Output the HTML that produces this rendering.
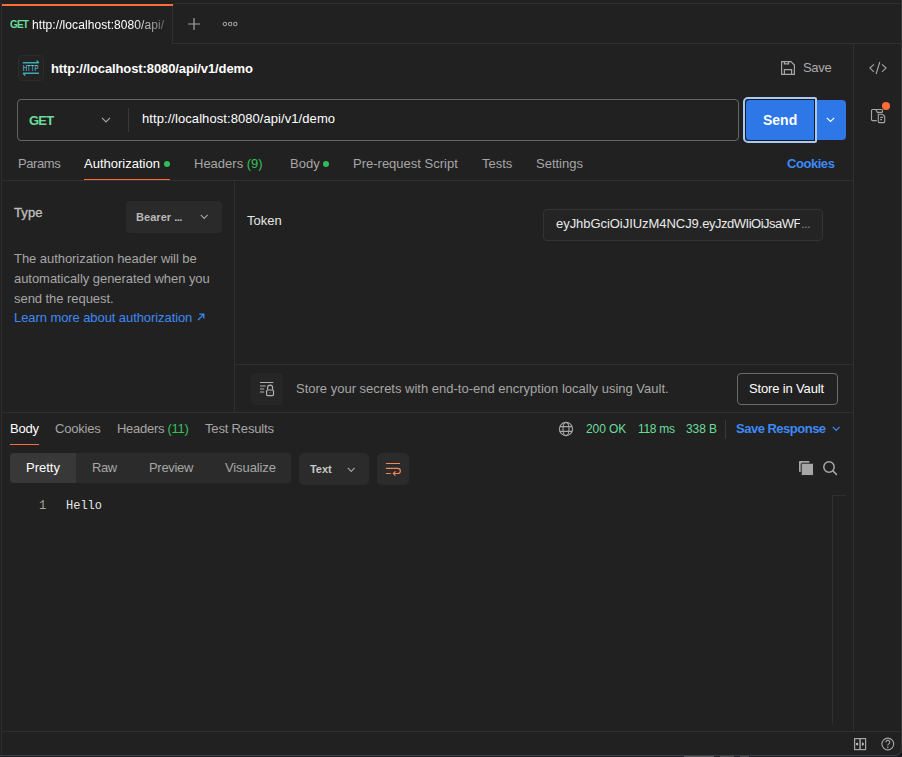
<!DOCTYPE html>
<html><head><meta charset="utf-8">
<style>
*{box-sizing:border-box;margin:0;padding:0}
html,body{width:902px;height:757px;overflow:hidden;background:#141418;font-family:"Liberation Sans",sans-serif;color:#fff}
.a{position:absolute;white-space:nowrap}
svg{display:block}
.hl{position:absolute;height:1px;background:#303030}
.vl{position:absolute;width:1px;background:#303030}
.sec{color:#a6a6a6}
.green{color:#6bdd9a}
.blue{color:#3d8af7}
</style></head><body>
<!-- window frame -->
<div class="a" style="left:0;top:756px;width:902px;height:1px;background:#1b1c2a"></div>
<div class="a" style="left:684px;top:756px;width:30px;height:1px;background:#55555e"></div>
<div class="a" style="left:720px;top:756px;width:14px;height:1px;background:#4a4a52"></div>
<div class="a" style="left:740px;top:756px;width:9px;height:1px;background:#4a4a52"></div>
<div class="a" style="left:0;top:0;width:902px;height:756px;background:#212121;border-right:1px solid #373737;border-bottom:1px solid #3e4046;border-bottom-right-radius:7px"></div>
<div class="hl" style="left:173px;top:3px;width:728px"></div>
<div class="hl" style="left:0;top:3px;width:2px"></div>
<div class="vl" style="left:1px;top:4px;height:751px;background:#2e2e2e"></div>
<!-- tab -->
<div class="a" style="left:2px;top:4px;width:171px;height:2px;background:#ff6c37"></div>
<div class="vl" style="left:172px;top:6px;height:37px"></div>
<div class="a" style="left:10px;top:19px;font-size:10px;letter-spacing:-0.9px;font-weight:bold;color:#6bdd9a">GET</div>
<div class="a" style="left:32px;top:18px;font-size:12px;color:#fff;letter-spacing:0.08px;-webkit-mask-image:linear-gradient(90deg,#000 100px,rgba(0,0,0,.3) 132px)">http://localhost:8080/api/</div>
<div class="hl" style="left:172px;top:43px;width:730px"></div>
<div class="a" style="left:188px;top:18px;width:12px;height:12px">
 <svg width="12" height="12"><path d="M6 0V12M0 6H12" stroke="#a6a6a6" stroke-width="1.2"/></svg></div>
<div class="a" style="left:222px;top:20px;width:16px;height:8px">
 <svg width="16" height="8"><circle cx="2.9" cy="4" r="1.7" fill="none" stroke="#a6a6a6" stroke-width="1.05"/><circle cx="8.1" cy="4" r="1.7" fill="none" stroke="#a6a6a6" stroke-width="1.05"/><circle cx="13.3" cy="4" r="1.7" fill="none" stroke="#a6a6a6" stroke-width="1.05"/></svg></div>

<!-- right sidebar icons -->
<div class="a" style="left:869px;top:61px"><svg width="18" height="14"><path d="M4.9 3.4L0.9 7.1L4.9 10.8M13 3.4L17 7.1L13 10.8M10.8 0.9L7.1 13" stroke="#a6a6a6" stroke-width="1.15" fill="none"/></svg></div>
<div class="a" style="left:870px;top:105px"><svg width="20" height="20"><path d="M6.7 15.6H2.5Q1.5 15.6 1.5 14.6V5.5Q1.5 4.5 2.5 4.5H11.5Q12.5 4.5 12.5 5.5V6.4Q12.5 7.4 11.5 7.4H7.3L5.8 4.6" stroke="#a6a6a6" stroke-width="1.1" fill="none"/><path d="M8.3 9.3H12.5L14.7 11.3V16.6Q14.7 17.6 13.7 17.6H9.3Q8.3 17.6 8.3 16.6Z" stroke="#a6a6a6" stroke-width="1.1" fill="none"/><path d="M10.2 12.4H13M10.2 14.6H12" stroke="#a6a6a6" stroke-width="1.1" fill="none"/></svg></div>
<div class="a" style="left:882px;top:102px;width:8px;height:8px;border-radius:4px;background:#ff6c37"></div>
<!-- right sidebar divider -->
<div class="vl" style="left:853px;top:43px;height:688px"></div>

<!-- title row -->
<div class="a" style="left:18px;top:55px;width:26px;height:26px;border:1px solid #2c2c2c;border-radius:4px;background:#232323">
 <svg width="26" height="26" style="position:absolute;left:-1px;top:-1px" viewBox="0 0 26 26"><path d="M4.8 7.8H20.6M18.6 5.6L21 7.9M5 18.2H21M5 18.2L7.3 20.6" stroke="#3fa9b2" stroke-width="1.4" fill="none"/><text x="4.8" y="15.9" font-size="8.2" font-family="Liberation Sans" textLength="15.6" lengthAdjust="spacingAndGlyphs" fill="#6fd3f0">HTTP</text></svg></div>
<div class="a" style="left:51px;top:61px;font-size:13px;font-weight:bold;letter-spacing:-0.1px">http://localhost:8080/api/v1/demo</div>
<div class="a" style="left:781px;top:61px"><svg width="14" height="14"><path d="M0.6 0.6H10L13.4 4V13.4H0.6Z M3.4 0.6V2.9H7.6V0.6 M3.4 13.4V8.6H10.6V13.4" stroke="#a6a6a6" stroke-width="1.2" fill="none"/></svg></div>
<div class="a" style="left:803px;top:60px;font-size:13px;color:#ababab;letter-spacing:-0.3px">Save</div>

<!-- request bar -->
<div class="a" style="left:17px;top:99px;width:722px;height:42px;border:1px solid #666;border-radius:4px"></div>
<div class="a green" style="left:29px;top:113px;font-size:13px;font-weight:bold;letter-spacing:-0.8px">GET</div>
<div class="a" style="left:101px;top:117px"><svg width="10" height="6"><path d="M1 0.8L5 4.8L9 0.8" stroke="#a6a6a6" stroke-width="1.2" fill="none"/></svg></div>
<div class="vl" style="left:128px;top:108px;height:24px;background:#3a3a3a"></div>
<div class="a" style="left:142px;top:111px;font-size:13px;letter-spacing:0.07px">http://localhost:8080/api/v1/demo</div>
<div class="a" style="left:815px;top:100px;width:31px;height:40px;background:#2d78e6;border-radius:0 4px 4px 0"></div>
<div class="a" style="left:826px;top:117px"><svg width="10" height="6"><path d="M0.8 0.8L4.5 4.5L8.2 0.8" stroke="#fff" stroke-width="1.2" fill="none"/></svg></div>
<div class="a" style="left:743px;top:97px;width:74px;height:46px;border:2px solid #a9c9f5;border-radius:5px 2px 2px 5px"></div>
<div class="a" style="left:745px;top:99px;width:70px;height:42px;border:1px solid #1a1a1a;background:#2d78e6;border-radius:4px 0 0 4px"></div>
<div class="a" style="left:763px;top:112px;font-size:14px;font-weight:bold">Send</div>

<!-- request tabs -->
<div class="a sec" style="left:18px;top:156px;font-size:13px;letter-spacing:-0.4px">Params</div>
<div class="a" style="left:84px;top:156px;font-size:13px">Authorization</div>
<div class="a" style="left:84px;top:179px;width:86px;height:1px;background:#ff6c37"></div>
<div class="a" style="left:164px;top:161px;width:6px;height:6px;border-radius:3px;background:#30bd58"></div>
<div class="a" style="left:323px;top:161px;width:6px;height:6px;border-radius:3px;background:#30bd58"></div>
<div class="a sec" style="left:194px;top:156px;font-size:13px">Headers <span style="color:#34c25a">(9)</span></div>
<div class="a sec" style="left:290px;top:156px;font-size:13px">Body</div>
<div class="a sec" style="left:353px;top:156px;font-size:13px">Pre-request Script</div>
<div class="a sec" style="left:482px;top:156px;font-size:13px">Tests</div>
<div class="a sec" style="left:536px;top:156px;font-size:13px">Settings</div>
<div class="a blue" style="left:787px;top:156px;font-size:13px;font-weight:bold;letter-spacing:-0.45px">Cookies</div>
<div class="hl" style="left:2px;top:180px;width:851px"></div>

<!-- auth left -->
<div class="vl" style="left:234px;top:181px;height:231px"></div>
<div class="a" style="left:14px;top:205px;font-size:13px;color:#bdbdbd;-webkit-text-stroke:0.35px #bdbdbd;letter-spacing:0.1px">Type</div>
<div class="a" style="left:126px;top:201px;width:96px;height:32px;background:#2a2a2a;border-radius:4px"></div>
<div class="a" style="left:200px;top:214px"><svg width="10" height="6"><path d="M0.8 0.8L4.2 4.4L7.6 0.8" stroke="#a6a6a6" stroke-width="1.1" fill="none"/></svg></div>
<div class="a" style="left:136px;top:211px;font-size:11px;font-weight:bold;color:#b8b8b8;letter-spacing:0.05px">Bearer <span style="letter-spacing:-0.6px">...</span></div>
<div class="a sec" style="left:14px;top:249px;font-size:13px;line-height:20px;white-space:normal;width:215px;letter-spacing:-0.05px">The authorization header will be<br>automatically generated when you<br>send the request.</div>
<div class="a blue" style="left:14px;top:308px;font-size:13px;line-height:20px;letter-spacing:-0.08px">Learn more about authorization</div>
<div class="a" style="left:197px;top:313px"><svg width="8" height="8"><path d="M1 7L6.6 1.4M2.4 1.2H6.8V5.6" stroke="#3d8af7" stroke-width="1.3" fill="none"/></svg></div>

<!-- token -->
<div class="a" style="left:247px;top:213px;font-size:13px;color:#e6e6e6">Token</div>
<div class="a" style="left:543px;top:209px;width:280px;height:32px;border:1px solid #343434;background:#242424;border-radius:4px"></div>
<div class="a" style="left:556px;top:216px;width:244px;overflow:hidden;font-size:13px;color:#eaeaea;letter-spacing:-0.05px">eyJhbGciOiJIUzM4NCJ9.<span style="letter-spacing:-0.5px">eyJzdWIiOiJsaWFtYWthbmRh</span></div>
<div class="a" style="left:801px;top:216px;font-size:13px;color:#8a8a8a;letter-spacing:-0.6px">...</div>

<!-- vault -->
<div class="hl" style="left:235px;top:364px;width:618px"></div>
<div class="a" style="left:251px;top:373px;width:32px;height:32px;background:#262626;border-radius:4px"><svg width="32" height="32"><path d="M9 9.5H22.2M9 13H14.8M9 16H13.2M9 19H13.2" stroke="#b0b0b0" stroke-width="1.2" fill="none"/><path d="M16.6 16.8V14.6A2.5 2.5 0 0 1 21.6 14.6V16.8" stroke="#b0b0b0" stroke-width="1.2" fill="none"/><rect x="15.6" y="17" width="6.9" height="5.6" rx="1" stroke="#b0b0b0" stroke-width="1.2" fill="none"/><circle cx="19" cy="19.8" r="0.6" fill="#888"/></svg></div>
<div class="a sec" style="left:296px;top:381px;font-size:13px">Store your secrets with end-to-end encryption locally using Vault.</div>
<div class="a" style="left:737px;top:373px;width:101px;height:32px;border:1px solid #6b6b6b;border-radius:4px"></div>
<div class="a" style="left:749px;top:381px;font-size:13px;letter-spacing:-0.15px">Store in Vault</div>
<div class="hl" style="left:2px;top:412px;width:851px"></div>

<!-- response tabs -->
<div class="a" style="left:10px;top:421px;font-size:13px;letter-spacing:-0.25px">Body</div>
<div class="a" style="left:10px;top:444px;width:29px;height:1px;background:#ff6c37"></div>
<div class="a sec" style="left:55px;top:421px;font-size:13px;letter-spacing:-0.2px">Cookies</div>
<div class="a sec" style="left:117px;top:421px;font-size:13px;letter-spacing:-0.28px">Headers <span style="color:#34c25a">(11)</span></div>
<div class="a sec" style="left:205px;top:421px;font-size:13px;letter-spacing:-0.17px">Test Results</div>
<div class="a" style="left:558px;top:421px"><svg width="16" height="16"><circle cx="8" cy="8" r="6.6" stroke="#a6a6a6" stroke-width="1.1" fill="none"/><ellipse cx="8" cy="8" rx="3" ry="6.6" stroke="#a6a6a6" stroke-width="1.1" fill="none"/><path d="M1.8 5.6H14.2M1.8 10.4H14.2" stroke="#a6a6a6" stroke-width="1.1" fill="none"/></svg></div>
<div class="a green" style="left:586px;top:422px;font-size:12px;letter-spacing:-0.1px">200 OK</div>
<div class="a green" style="left:638px;top:422px;font-size:12px;letter-spacing:-0.3px">118 ms</div>
<div class="a green" style="left:686px;top:422px;font-size:12px;letter-spacing:-0.1px">338 B</div>
<div class="vl" style="left:725px;top:420px;height:19px;background:#3a3a3a"></div>
<div class="a blue" style="left:736px;top:421px;font-size:13px;font-weight:bold;letter-spacing:-0.5px">Save Response</div>
<div class="a" style="left:832px;top:426px"><svg width="10" height="6"><path d="M0.8 0.8L4.2 4.4L7.6 0.8" stroke="#3d8af7" stroke-width="1.2" fill="none"/></svg></div>

<!-- segmented -->
<div class="a" style="left:10px;top:453px;width:281px;height:30px;background:#2b2b2b;border-radius:4px"></div>
<div class="a" style="left:10px;top:453px;width:66px;height:30px;background:#383838;border-radius:4px 0 0 4px"></div>
<div class="a" style="left:26px;top:460px;font-size:13px">Pretty</div>
<div class="a sec" style="left:92px;top:460px;font-size:13px;letter-spacing:-0.4px">Raw</div>
<div class="a sec" style="left:149px;top:460px;font-size:13px;letter-spacing:-0.3px">Preview</div>
<div class="a sec" style="left:225px;top:460px;font-size:13px;letter-spacing:-0.1px">Visualize</div>
<div class="a" style="left:299px;top:453px;width:70px;height:32px;background:#2b2b2b;border-radius:5px"></div>
<div class="a" style="left:310px;top:463px;font-size:11px;font-weight:bold;color:#c8c8c8;letter-spacing:-0.05px">Text</div>
<div class="a" style="left:347px;top:467px"><svg width="10" height="6"><path d="M0.8 0.8L4.2 4.4L7.6 0.8" stroke="#a6a6a6" stroke-width="1.1" fill="none"/></svg></div>
<div class="a" style="left:377px;top:453px;width:32px;height:32px;background:#2b2b2b;border-radius:5px"><svg width="32" height="32"><path d="M8.9 10.5H23M8.9 15.4H20.8A2.55 2.55 0 0 1 20.8 20.5H16.4M18.5 18.3L16.3 20.5L18.5 22.7M8.9 20.5H13.8" stroke="#f4875a" stroke-width="1.15" fill="none"/></svg></div>

<div class="a" style="left:796px;top:458px"><svg width="20" height="20"><rect x="3" y="3" width="10.5" height="11" rx="0.8" fill="#a6a6a6"/><rect x="5.2" y="5.2" width="12.3" height="12.3" rx="1" fill="#a6a6a6" stroke="#212121" stroke-width="1"/></svg></div>
<div class="a" style="left:820px;top:458px"><svg width="20" height="20"><circle cx="9" cy="9" r="5.2" stroke="#a6a6a6" stroke-width="1.5" fill="none"/><path d="M12.8 12.8L16.4 16.4" stroke="#a6a6a6" stroke-width="1.6" stroke-linecap="round"/></svg></div>
<!-- editor -->
<div class="a sec" style="left:39px;top:499px;font-family:'Liberation Mono',monospace;font-size:12px">1</div>
<div class="a" style="left:66px;top:499px;font-family:'Liberation Mono',monospace;font-size:12px;color:#e6e6e6">Hello</div>
<div class="vl" style="left:832px;top:495px;height:229px"></div>
<div class="hl" style="left:832px;top:495px;width:14px"></div>

<!-- status bar -->
<div class="hl" style="left:2px;top:731px;width:899px"></div>
<div class="a" style="left:853px;top:737px"><svg width="14" height="14"><rect x="1.6" y="1.6" width="11" height="11" stroke="#a6a6a6" stroke-width="1.2" fill="none"/><path d="M7.1 1V13" stroke="#a6a6a6" stroke-width="1.5"/><circle cx="4.1" cy="7.1" r="1.3" fill="#b8b8b8"/><path d="M9.4 5.6L11 7.1L9.4 8.6Z" fill="#b8b8b8" stroke="#b8b8b8" stroke-width="0.8"/></svg></div>
<div class="a" style="left:880px;top:736px"><svg width="16" height="16"><circle cx="7.8" cy="8" r="5.9" stroke="#a6a6a6" stroke-width="1.1" fill="none"/><path d="M5.9 6.4A1.95 1.95 0 1 1 8.6 8.1C8 8.4 7.8 8.8 7.8 9.5" stroke="#a6a6a6" stroke-width="1.1" fill="none"/><circle cx="7.8" cy="11.2" r="0.7" fill="#c0c0c0"/></svg></div>
</body></html>
